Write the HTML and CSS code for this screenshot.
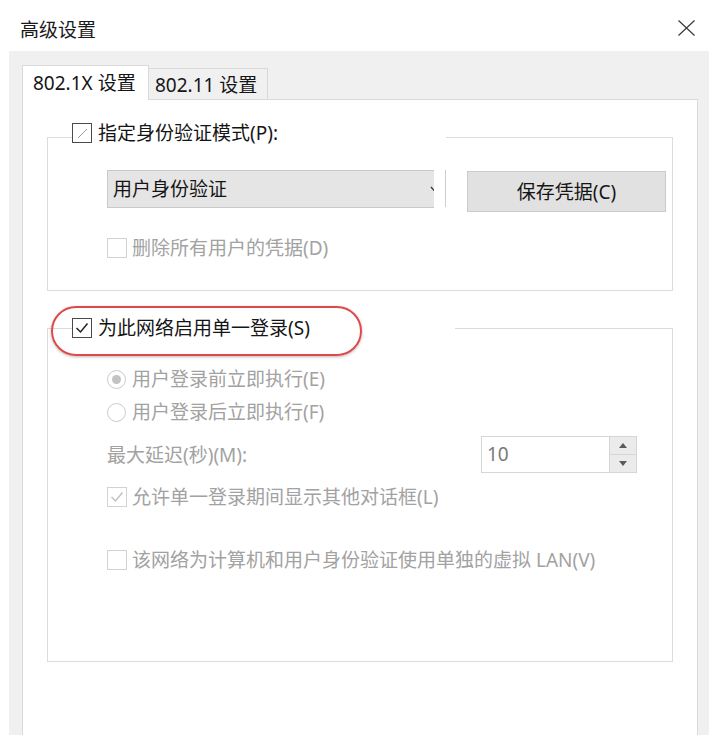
FILE: index.html
```html
<!DOCTYPE html>
<html lang="zh-CN">
<head>
<meta charset="utf-8">
<title>高级设置</title>
<link rel="stylesheet" href="styles.css">
</head>
<body>
<div class="dialog">
  <header class="titlebar">
    <h1 class="title">高级设置</h1>
    <span class="close" aria-label="关闭">
      <svg width="17" height="16" viewBox="0 0 17 16"><path d="M0.5 0.5 L16.5 15.5 M16.5 0.5 L0.5 15.5" stroke="#3a3a3a" stroke-width="1.2" fill="none"/></svg>
    </span>
  </header>
  <div class="client">
    <div class="tabs">
      <div class="tab tab-active">802.1X 设置</div>
      <div class="tab tab-second">802.11 设置</div>
    </div>
    <div class="panel">
      <fieldset class="group group-auth">
        <legend class="legend legend-auth">
          <span class="legend-inner">
            <span class="cb cb-dark">
              <svg width="18" height="18" viewBox="0 0 18 18"><path d="M5 14 L14 5" stroke="#9a9a9a" stroke-width="1" fill="none"/></svg>
            </span>
            <span class="label">指定身份验证模式(P):</span>
          </span>
        </legend>
        <div class="group-body body-auth">
          <div class="auth-row">
            <div class="select">
              <span class="select-text">用户身份验证</span>
              <svg class="chev" width="10" height="7" viewBox="0 0 10 7"><path d="M1 1 L5 5.5 L9 1" stroke="#333" stroke-width="1.3" fill="none"/></svg>
            </div>
            <span class="select-edge"></span>
            <span class="btn">保存凭据(C)</span>
          </div>
          <div class="check disabled row-del">
            <span class="cb cb-light"></span>
            <span class="label">删除所有用户的凭据(D)</span>
          </div>
        </div>
      </fieldset>

      <fieldset class="group group-sso">
        <legend class="legend legend-sso">
          <span class="highlight"></span>
          <span class="legend-inner">
            <span class="cb cb-dark">
              <svg width="18" height="18" viewBox="0 0 18 18"><path d="M3.5 9 L7.5 13 L14.5 4.5" stroke="#222" stroke-width="1.5" fill="none"/></svg>
            </span>
            <span class="label">为此网络启用单一登录(S)</span>
          </span>
        </legend>
        <div class="group-body body-sso">
          <div class="check disabled row-r1">
            <span class="radio radio-on"><span class="dot"></span></span>
            <span class="label">用户登录前立即执行(E)</span>
          </div>
          <div class="check disabled row-r2">
            <span class="radio"></span>
            <span class="label">用户登录后立即执行(F)</span>
          </div>
          <div class="delay-row disabled">
            <span class="label">最大延迟(秒)(M):</span>
            <div class="spinner">
              <span class="spin-value">10</span>
              <span class="spin-arrows">
                <span class="spin-btn"><svg width="8" height="5" viewBox="0 0 8 5"><path d="M0 5 L4 0 L8 5 Z" fill="#5a5a5a"/></svg></span>
                <span class="spin-btn spin-down"><svg width="8" height="5" viewBox="0 0 8 5"><path d="M0 0 L8 0 L4 5 Z" fill="#5a5a5a"/></svg></span>
              </span>
            </div>
          </div>
          <div class="check disabled row-l">
            <span class="cb cb-light">
              <svg width="18" height="18" viewBox="0 0 18 18"><path d="M3.5 9 L7.5 13 L14.5 4.5" stroke="#c2c2c2" stroke-width="1.5" fill="none"/></svg>
            </span>
            <span class="label">允许单一登录期间显示其他对话框(L)</span>
          </div>
          <div class="check disabled row-v">
            <span class="cb cb-light"></span>
            <span class="label">该网络为计算机和用户身份验证使用单独的虚拟 LAN(V)</span>
          </div>
        </div>
      </fieldset>
    </div>
  </div>
</div>
</body>
</html>
```
FILE: styles.css
```css
* { box-sizing: border-box; }
html, body { margin: 0; padding: 0; }
body {
  background: #fff;
  font-family: "Noto Sans", "Noto Sans CJK SC", sans-serif;
  font-size: 19px;
  color: #151515;
  width: 709px;
  height: 735px;
  overflow: hidden;
}
.dialog { display: flex; flex-direction: column; height: 735px; }

.titlebar {
  height: 51px;
  flex: none;
  display: flex;
  align-items: center;
  justify-content: space-between;
  padding: 8px 14px 0 20px;
}
.title { margin: 0; font-size: 19px; font-weight: normal; line-height: 22px; color: #1a1a1a; }
.close { display: block; width: 17px; height: 16px; margin-top: -3px; }
.close svg { display: block; }

.client {
  flex: 1;
  margin-left: 9px;
  background: #f0f0f0;
  padding: 14px 11px 0 13px;
  display: flex;
  flex-direction: column;
}
.tabs { display: flex; align-items: flex-end; height: 34px; flex: none; }
.tab {
  height: 31px;
  display: flex;
  align-items: center;
  border: 1px solid #d9d9d9;
  border-bottom: 0;
  background: #f0f0f0;
  line-height: 22px;
  white-space: nowrap;
}
.tab-active {
  height: 35px;
  width: 127px;
  background: #fff;
  padding-left: 10px;
  margin-bottom: -1px;
  position: relative;
  z-index: 1;
}
.tab-second { width: 119px; border-left: 0; padding-left: 6px; padding-top: 1px; }

.panel {
  flex: 1;
  background: #fff;
  border: 1px solid #d9d9d9;
  border-bottom: 0;
  padding: 22px 24px 0 24px;
}

.group {
  margin: 0;
  padding: 0;
  border: 1px solid #dcdcdc;
  min-width: 0;
}
.legend { padding: 0; margin-left: 24px; position: relative; }
.legend-auth { width: 374px; padding-bottom: 8px; }
.legend-sso { width: 383px; }
.legend-inner { display: flex; align-items: center; height: 22px; gap: 6px; white-space: nowrap; }
.label { line-height: 22px; white-space: nowrap; }

.cb {
  width: 20px;
  height: 20px;
  flex: none;
  border: 1px solid #c8c8c8;
  background: #fff;
  display: flex;
  align-items: center;
  justify-content: center;
}
.cb svg { display: block; }
.cb-dark { border-color: #4a4a4a; }
.cb-light { border-color: #d2d2d2; }

.group-sso { margin-top: 26px; }

.highlight {
  position: absolute;
  left: -21px;
  top: -11px;
  width: 311px;
  height: 50px;
  border: 2.5px solid #de4a4a;
  border-radius: 25px;
  box-shadow: 0 1px 3px rgba(0, 0, 0, 0.28);
  pointer-events: none;
}

.group-body { padding-left: 59px; }
.body-auth { padding-top: 18px; padding-bottom: 31px; }
.body-sso { padding-top: 29px; padding-bottom: 90px; }

.auth-row { display: flex; align-items: flex-start; height: 42px; }
.select {
  width: 327px;
  height: 38px;
  background: #e5e5e5;
  border: 1px solid #c9c9c9;
  border-right: 0;
  display: flex;
  align-items: center;
  justify-content: space-between;
  padding-left: 5px;
  overflow: hidden;
}
.select-text { line-height: 22px; }
.chev { margin-right: -6px; flex: none; }
.select-edge { width: 1px; height: 37px; background: #cfcfcf; margin-left: 11px; }
.btn {
  margin-left: 21px;
  margin-top: 1px;
  width: 199px;
  height: 41px;
  background: #e1e1e1;
  border: 1px solid #cbcbcb;
  display: flex;
  align-items: center;
  justify-content: center;
  line-height: 22px;
}

.check { display: flex; align-items: center; height: 22px; gap: 5px; }
.disabled { color: #a2a2a2; }
.row-del { margin-top: 25px; }

.radio {
  width: 19px;
  height: 19px;
  flex: none;
  border: 1px solid #cacaca;
  border-radius: 50%;
  background: #fff;
  display: flex;
  align-items: center;
  justify-content: center;
  margin-right: 1px;
}
.dot { width: 9px; height: 9px; border-radius: 50%; background: #c3c3c3; }
.row-r2 { margin-top: 11px; }

.delay-row {
  display: flex;
  align-items: center;
  justify-content: space-between;
  width: 530px;
  height: 37px;
  margin-top: 13px;
}
.spinner {
  width: 156px;
  height: 37px;
  border: 1px solid #d6d6d6;
  background: #fff;
  display: flex;
}
.spin-value { flex: 1; padding-left: 5px; line-height: 35px; color: #7a7a7a; }
.spin-arrows {
  width: 27px;
  display: flex;
  flex-direction: column;
  border-left: 1px solid #d6d6d6;
  background: #ebebeb;
}
.spin-btn { flex: 1; display: flex; align-items: center; justify-content: center; }
.spin-down { border-top: 1px solid #d6d6d6; }
.spin-btn svg { display: block; }

.row-l { margin-top: 13px; }
.row-v { margin-top: 41px; }
```
